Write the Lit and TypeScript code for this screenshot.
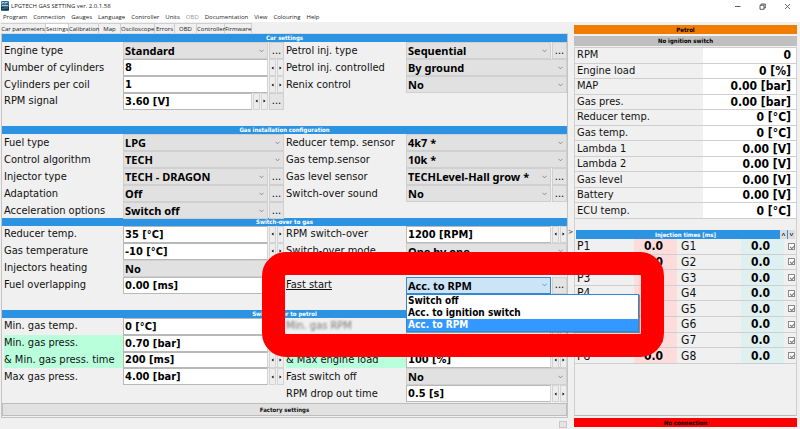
import { LitElement, html, css, svg, nothing, TemplateResult } from "lit";
import { customElement, property } from "lit/decorators.js";
import { classMap } from "lit/directives/class-map.js";

type Kind = "select" | "number" | "none";

interface Field {
  id: string;
  label: string;
  value?: string;
  kind: Kind;
  more?: boolean;
  green?: boolean;
  dim?: boolean;
  open?: boolean;
}

const sel = (id: string, label: string, value: string, more = false): Field => ({ id, label, value, kind: "select", more });
const num = (id: string, label: string, value: string, extra: Partial<Field> = {}): Field => ({ id, label, value, kind: "number", ...extra });
const blank: Field = { id: "", label: "", kind: "none" };

const SECTIONS: { title: string; fields: Field[] }[] = [
  {
    title: "Car settings",
    fields: [
      sel("engine", "Engine type", "Standard", true), sel("injtype", "Petrol inj. type", "Sequential", true),
      num("cyl", "Number of cylinders", "8"), sel("injctl", "Petrol inj. controlled", "By ground"),
      num("coil", "Cylinders per coil", "1"), sel("renix", "Renix control", "No"),
      num("rpmsig", "RPM signal", "3.60 [V]", { more: true }), blank,
      blank, blank,
    ],
  },
  {
    title: "Gas installation configuration",
    fields: [
      sel("fuel", "Fuel type", "LPG"), sel("redsens", "Reducer temp. sensor", "4k7 *"),
      sel("algo", "Control algorithm", "TECH"), sel("gassens", "Gas temp.sensor", "10k *"),
      sel("injector", "Injector type", "TECH - DRAGON", true), sel("level", "Gas level sensor", "TECHLevel-Hall grow *", true),
      sel("adapt", "Adaptation", "Off", true), sel("sound", "Switch-over sound", "No", true),
      sel("accel", "Acceleration options", "Switch off", true), blank,
    ],
  },
  {
    title: "Switch-over to gas",
    fields: [
      num("redtemp", "Reducer temp.", "35 [°C]"), num("rpmover", "RPM switch-over", "1200 [RPM]"),
      num("gastemp", "Gas temperature", "-10 [°C]"), sel("mode", "Switch-over mode", "One by one"),
      sel("heat", "Injectors heating", "No"), blank,
      num("overlap", "Fuel overlapping", "0.00 [ms]"), { ...sel("fast", "Fast start", "Acc. to RPM", true), open: true },
      blank, blank,
    ],
  },
  {
    title: "Switch-over to petrol",
    fields: [
      num("mintemp", "Min. gas temp.", "0 [°C]"), num("minrpm", "Min. gas RPM", "900 [RPM]", { dim: true }),
      num("minpress", "Min. gas press.", "0.70 [bar]", { green: true }), blank,
      num("mintime", "& Min. gas press. time", "200 [ms]", { green: true }), num("maxload", "& Max engine load", "100 [%]", { green: true }),
      num("maxpress", "Max gas press.", "4.00 [bar]"), sel("fastoff", "Fast switch off", "No"),
      blank, num("dropout", "RPM drop out time", "0.5 [s]"),
    ],
  },
];

const READINGS: [string, string][] = [
  ["RPM", "0"], ["Engine load", "0 [%]"], ["MAP", "0.00 [bar]"], ["Gas pres.", "0.00 [bar]"],
  ["Reducer temp.", "0 [°C]"], ["Gas temp.", "0 [°C]"], ["Lambda 1", "0.00 [V]"], ["Lambda 2", "0.00 [V]"],
  ["Gas level", "0.00 [V]"], ["Battery", "0.00 [V]"], ["ECU temp.", "0 [°C]"],
];

const MENU = ["Program", "Connection", "Gauges", "Language", "Controller", "Units", "OBD", "Documentation", "View", "Colouring", "Help"];
const TABS = ["Car parameters", "Settings", "Calibration", "Map", "Osciloscope", "Errors", "OBD", "Controller", "Firmware"];
const FAST_OPTIONS = ["Switch off", "Acc. to ignition switch", "Acc. to RPM"];

const base = css`
  * { box-sizing: border-box; }
  button, input, select {
    font: inherit; color: inherit; margin: 0; padding: 0; border: 0;
    border-radius: 0; background: none; appearance: none; min-width: 0;
  }
  svg { display: block; }
`;

@customElement("setting-field")
class SettingField extends LitElement {
  @property({ attribute: false }) field: Field = blank;

  static styles = [base, css`
    :host { display: contents; }
    .label {
      margin-left: 2px; display: flex; align-items: center; white-space: nowrap;
      font-size: 11px; line-height: 16px; min-width: 0;
    }
    .green { background: #b9ffdc; }
    .cell { display: flex; gap: 1px; position: relative; min-width: 0; font-size: 11px; font-weight: bold; color: #000; }
    .greenline { box-shadow: inset 0 -1px #a9d3bd; }
    .value { flex: 1; width: 100%; height: 100%; padding-left: 1px; white-space: nowrap; }
    .wrap { flex: 1; display: grid; align-items: center; min-width: 0; }
    .wrap > * { grid-area: 1 / 1; }
    .wrap .value { background: #e1e1e1; border: 1px solid #d0d0d0; font-family: "Noto Sans", sans-serif; }
    .chevron { justify-self: end; margin-right: 4px; pointer-events: none; }
    .text { background: #fff; border: 1px solid #b9b9b9; border-right-color: #d4d4d4; }
    .spin { flex: none; width: 7px; background: #ededed; border: 1px solid #d4d4d4; display: grid; place-items: center; }
    .more { flex: none; width: 15px; background: #e4e4e4; border: 1px solid #cfcfcf; font-weight: normal; line-height: 12px; }
    .open .wrap .value { background: #cce4f7; border-color: #3a87c8; }
    .dim { color: #777; filter: blur(1px); }
    .underline { text-decoration: underline; }
    .list {
      position: absolute; z-index: 2; left: 0; top: 100%; width: 233px; margin: 0; padding: 0;
      list-style: none; background: #fff; border: 1px solid #2f87d6; box-shadow: 1px 1px 1px #0006;
    }
    .item { padding-left: 1px; font-size: 10px; line-height: 12px; white-space: nowrap; }
    .picked { background: #3398ff; color: #fff; }
    .frame {
      position: absolute; z-index: 3; left: -144px; top: -25px; width: 402px; height: 105px;
      border: 23px solid #f00; border-radius: 24px; pointer-events: none;
    }
  `];

  private spin(dir: string) {
    return html`<button class="spin" aria-label=${dir}>
      <svg width="3" height="4" viewBox="0 0 3 4">${dir === "Less" ? svg`<path d="M2.5 0.5L0.5 2L2.5 3.5Z" />` : svg`<path d="M0.5 0.5L2.5 2L0.5 3.5Z" />`}</svg>
    </button>`;
  }

  render(): TemplateResult {
    const f = this.field;
    if (f.kind === "none") return html`<span></span><span></span>`;
    return html`
      <label class=${classMap({ label: true, green: !!f.green })} for=${f.id}>
        <span class=${classMap({ dim: !!f.dim, underline: !!f.open })}>${f.label}</span>
      </label>
      <div class=${classMap({ cell: true, open: !!f.open, greenline: !!f.green })}>
        ${f.kind === "select"
          ? html`<div class="wrap">
              <select class="value" id=${f.id}><option>${f.value}</option></select>
              <svg class="chevron" width="5" height="4" viewBox="0 0 5 4"><path d="M0.5 0.8L2.5 2.8L4.5 0.8" fill="none" stroke="#777" stroke-width=".8" /></svg>
            </div>`
          : html`<input class="value text" id=${f.id} .value=${f.value ?? ""} />${this.spin("Less")}${this.spin("More")}`}
        ${f.more ? html`<button class="more" aria-label="Details of ${f.label}">...</button>` : nothing}
        ${f.open
          ? html`<ul class="list">${FAST_OPTIONS.map((o) => html`<li class=${classMap({ item: true, picked: o === f.value })}>${o}</li>`)}</ul>
              <div class="frame"></div>`
          : nothing}
      </div>`;
  }
}

@customElement("app-root")
class AppRoot extends LitElement {
  static styles = [base, css`
    :host {
      display: flex; flex-direction: column; min-height: 100vh; overflow: hidden;
      background: #f0f0f0; color: #111;
      font-family: "DejaVu Sans Condensed", "Noto Sans", sans-serif;
    }
    .top { background: #fff; font-family: "Open Sans", "Noto Sans", sans-serif; font-size: 6px; height: 22px; }
    .title { display: flex; align-items: center; height: 12px; padding: 0 9px 0 1px; gap: 2px; }
    .name { flex: 1; color: #222; }
    .win { display: flex; gap: 18px; }
    .menu { display: flex; gap: 6px; padding-left: 3px; line-height: 10px; color: #222; }
    .off { color: #999; }
    .columns { flex: 1; display: grid; grid-template-columns: 568fr 5px 227fr; }
    .left { display: flex; flex-direction: column; min-width: 0; padding: 1px 0 1px 1px; }
    .tabs {
      display: grid; grid-template-columns: 45px 23px 30px 22px 34px 20px 22px 28px 27px; height: 10px;
      font-family: "Open Sans", "Noto Sans", sans-serif; font-size: 6px; color: #222;
    }
    .tab { border: 1px solid #cfcfcf; border-width: 1px 1px 0 0; white-space: nowrap; line-height: 8px; }
    .on { background: #fff; }
    .panel { border: 1px solid #c4c4c4; border-top-color: #dcdcdc; padding-bottom: 1px; }
    .heading {
      margin: 0; background: #2b93e2; color: #fff; font-size: 6px; line-height: 8px; height: 8px;
      text-align: center; font-weight: bold;
    }
    .fields { display: grid; grid-template-columns: 121fr 161fr 122fr 161fr; grid-template-rows: repeat(5, 1fr); height: 84px; }
    .factory {
      display: block; width: 100%; height: 13px; margin-top: 1px; background: #e1e1e1;
      border: 1px solid #bdbdbd; font-size: 6px; font-weight: bold;
    }
    .grip { align-self: flex-end; width: 8px; height: 7px; margin: 3px 1px 0; border: 1px solid #c8c8c8; background: #e4e4e4; }
    .splitter { display: grid; place-items: center; padding-top: 12px; font-size: 7px; color: #333; }
    .right { display: flex; flex-direction: column; padding: 3px 3px 2px 1px; min-width: 0; }
    .bar { flex: none; text-align: center; font-size: 6px; font-weight: bold; line-height: 9px; height: 9px; color: #000; }
    .petrol { background: #f07d00; margin-bottom: 2px; }
    .ignition { background: #bfbfbf; height: 10px; line-height: 10px; }
    .alarm { background: #f00; }
    .info { flex: 1; border: 1px solid #cfcfcf; border-bottom-color: #bbb; margin: 1px 0 2px; }
    table { width: 100%; border-collapse: collapse; table-layout: fixed; font-size: 12px; line-height: 14px; }
    th, td { padding: 0; text-align: left; font-weight: normal; border-bottom: 1px solid #cfcfcf; white-space: nowrap; }
    .readings { height: 171px; }
    .rname { width: 58%; padding-left: 2px; font-size: 11px; }
    .rval { background: #fff; text-align: right; padding-right: 5px; font-weight: bold; color: #000; }
    .inj-head { display: flex; gap: 1px; margin: 11px 1px 0; background: #2b93e2; height: 9px; }
    .inj-title { flex: 1; line-height: 9px; height: 9px; padding-left: 16px; }
    .sort { width: 7px; background: #ddd; display: grid; place-items: center; }
    .times { height: 125px; }
    .pname { width: 59px; padding-left: 2px; }
    .pval { background: #ffdcdc; text-align: center; padding-right: 4px; font-weight: bold; color: #000; }
    .gname { width: 64px; padding-left: 4px; }
    .gval { background: #dff0f1; text-align: center; padding-right: 4px; font-weight: bold; color: #000; }
    .ccell { width: 12px; }
    .check { display: block; width: 7px; height: 7px; margin-left: 4px; border: 1px solid #8a8a8a; background: #fff; }
    .check:checked::after {
      content: ""; display: block; width: 4px; height: 2px; margin: 1px 0 0 1px;
      border: solid #777; border-width: 0 0 1px 1px; transform: rotate(-45deg);
    }
  `];

  render() {
    return html`
      <header class="top">
        <div class="title">
          <svg width="8" height="10" viewBox="0 0 8 10"><rect width="8" height="10" rx="1" fill="#2b6c96" /><path d="M1 3V1.5H3M4 3V1.5H6.5M1 4.5H7" stroke="#cfe6f2" stroke-width=".8" fill="none" /><path d="M0 6H8V9H0Z" fill="#173548" /><path d="M1 8L3 7H7" stroke="#8fb4c8" stroke-width=".6" fill="none" /></svg>
          <span class="name">LPGTECH GAS SETTING ver. 2.0.1.58</span>
          <div class="win">
            <button aria-label="Minimize"><svg width="7" height="7" viewBox="0 0 7 7"><path d="M1 3.5H6.5" stroke="#333" stroke-width=".8" /></svg></button>
            <button aria-label="Restore"><svg width="7" height="7" viewBox="0 0 7 7"><path d="M1 2.2H5V6.3H1ZM2.2 2.2V1H6.3V5H5" stroke="#333" stroke-width=".8" fill="none" /></svg></button>
            <button aria-label="Close"><svg width="7" height="7" viewBox="0 0 7 7"><path d="M1 1L6 6M6 1L1 6" stroke="#333" stroke-width=".7" /></svg></button>
          </div>
        </div>
        <nav class="menu">
          ${MENU.map((m) => html`<button class=${classMap({ off: m === "OBD" })} ?disabled=${m === "OBD"}>${m}</button>`)}
        </nav>
      </header>
      <div class="columns">
        <main class="left">
          <div class="tabs">${TABS.map((t) => html`<button class=${classMap({ tab: true, on: t === "Settings" })}>${t}</button>`)}</div>
          <div class="panel">
            ${SECTIONS.map((s) => html`
              <h2 class="heading">${s.title}</h2>
              <div class="fields">${s.fields.map((f) => html`<setting-field .field=${f}></setting-field>`)}</div>`)}
            <button class="factory">Factory settings</button>
          </div>
          <span class="grip"></span>
        </main>
        <div class="splitter">&gt;</div>
        <aside class="right">
          <div class="bar petrol">Petrol</div>
          <div class="bar ignition">No ignition switch</div>
          <div class="info">
            <table class="readings">
              ${READINGS.map(([n, v]) => html`<tr><th class="rname">${n}</th><td class="rval">${v}</td></tr>`)}
            </table>
            <div class="inj-head">
              <h2 class="heading inj-title">Injection times [ms]</h2>
              <button class="sort" aria-label="Up"><svg width="5" height="5" viewBox="0 0 5 5"><path d="M1 4L2.5 1L4 4" fill="none" stroke="#222" stroke-width=".8" /></svg></button>
              <button class="sort" aria-label="Down"><svg width="5" height="5" viewBox="0 0 5 5"><path d="M1 1L2.5 4L4 1" fill="none" stroke="#222" stroke-width=".8" /></svg></button>
            </div>
            <table class="times">
              ${[1, 2, 3, 4, 5, 6, 7, 8].map((n) => html`<tr>
                <th class="pname">P${n}</th><td class="pval">0.0</td>
                <th class="gname">G${n}</th><td class="gval">0.0</td>
                <td class="ccell"><input class="check" type="checkbox" checked aria-label="Cylinder ${n}" /></td>
              </tr>`)}
            </table>
          </div>
          <div class="bar alarm">No connection</div>
        </aside>
      </div>`;
  }
}
